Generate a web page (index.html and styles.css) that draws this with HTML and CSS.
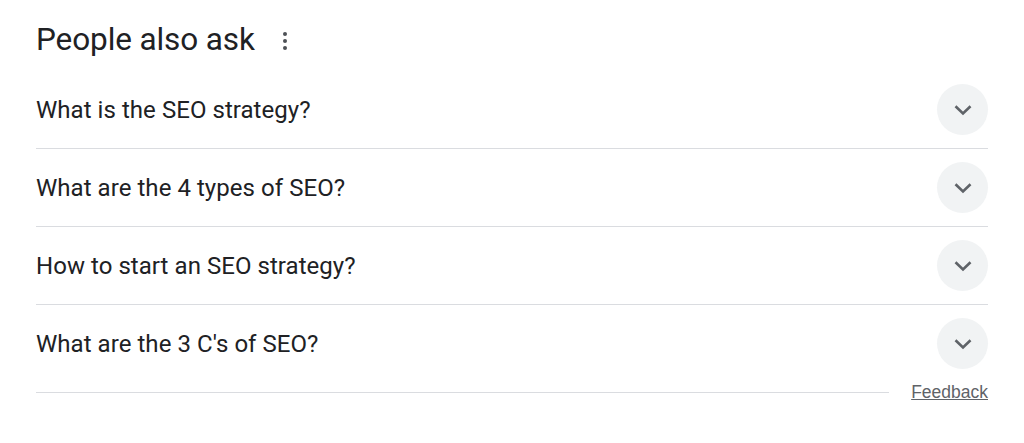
FILE: index.html
```html
<!DOCTYPE html>
<html>
<head>
<meta charset="utf-8">
<link rel="stylesheet" href="styles.css">
</head>
<body>
<div class="paa">
  <div class="head">
    <h2 class="title">People also ask</h2>
    <span class="more"><i></i><i></i><i></i></span>
  </div>
  <div class="row"><span class="q">What is the SEO strategy?</span><span class="btn"><svg viewBox="0 0 24 24" width="24" height="24"><path d="M4.5 8.2 12 15.4l7.5-7.2" fill="none" stroke="#5f6368" stroke-width="2.6"/></svg></span></div>
  <div class="row"><span class="q">What are the 4 types of SEO?</span><span class="btn"><svg viewBox="0 0 24 24" width="24" height="24"><path d="M4.5 8.2 12 15.4l7.5-7.2" fill="none" stroke="#5f6368" stroke-width="2.6"/></svg></span></div>
  <div class="row"><span class="q">How to start an SEO strategy?</span><span class="btn"><svg viewBox="0 0 24 24" width="24" height="24"><path d="M4.5 8.2 12 15.4l7.5-7.2" fill="none" stroke="#5f6368" stroke-width="2.6"/></svg></span></div>
  <div class="row last"><span class="q">What are the 3 C's of SEO?</span><span class="btn"><svg viewBox="0 0 24 24" width="24" height="24"><path d="M4.5 8.2 12 15.4l7.5-7.2" fill="none" stroke="#5f6368" stroke-width="2.6"/></svg></span></div>
  <div class="foot"><span class="line"></span><a class="fb" href="#">Feedback</a></div>
</div>
</body>
</html>
```
FILE: styles.css
```css
html, body { margin: 0; padding: 0; background: #fff; }
body { font-family: Roboto, "Liberation Sans", Arial, sans-serif; color: #202124; }
.paa { width: 952px; margin-left: 36px; padding-top: 15px; }
.head { display: flex; align-items: center; height: 56px; }
.head .title { margin-top: -6px; }
.more { margin-top: -4px; }
.title { margin: 0; font-weight: 400; font-size: 31.5px; line-height: 40px; color: #202124; letter-spacing: -0.1px; }
.more { display: flex; flex-direction: column; gap: 3px; margin-left: 28px; }
.more i { display: block; width: 4px; height: 4px; border-radius: 50%; background: #4d5156; }
.row { display: flex; align-items: center; justify-content: space-between; height: 77px; border-bottom: 1px solid #dadce0; }
.row.last { border-bottom: none; }
.q { font-size: 24px; color: #202124; letter-spacing: 0.05px; }
.btn { width: 51px; height: 51px; border-radius: 50%; background: #f1f3f4; display: flex; align-items: center; justify-content: center; }
.foot { display: flex; align-items: center; height: 20px; }
.line { flex: 1; height: 1px; background: #dadce0; }
.fb { margin-left: 22px; font-family: "Liberation Sans", Arial, sans-serif; font-size: 17.5px; color: #5f6368; text-decoration: underline; }
```
